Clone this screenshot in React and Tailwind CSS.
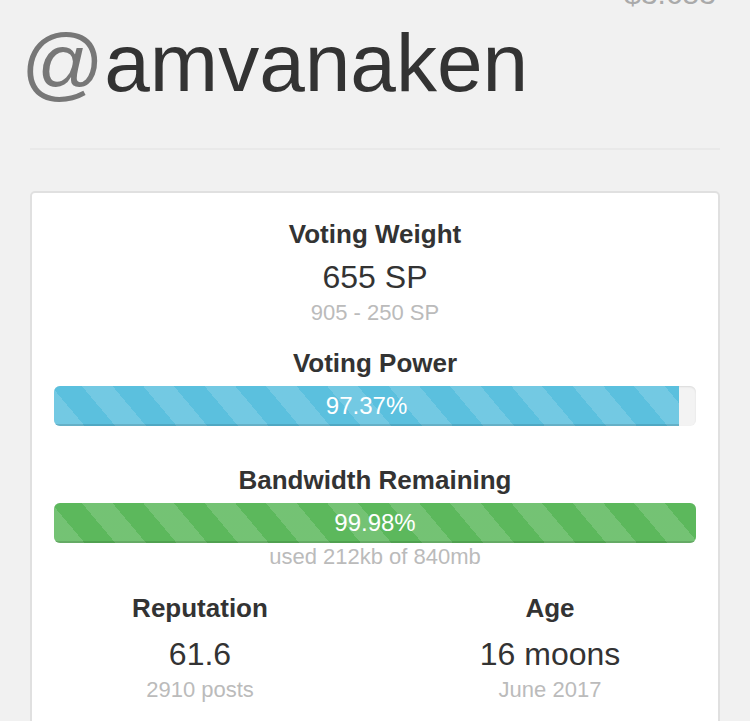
import React from 'react'

const BLUE_STRIPES =
  'bg-[#5bc0de] bg-[repeating-linear-gradient(50deg,rgba(255,255,255,0.15)_0_23.5px,transparent_23.5px_47px)]'
const GREEN_STRIPES =
  'bg-[#5cb85c] bg-[repeating-linear-gradient(50deg,rgba(255,255,255,0.15)_0_23.5px,transparent_23.5px_47px)]'

function Title({ children, className = '' }) {
  return (
    <div className={`text-[26px] leading-none font-bold text-[#333] ${className}`}>{children}</div>
  )
}

function Value({ children, className = '' }) {
  return <div className={`text-[32px] leading-none text-[#333] ${className}`}>{children}</div>
}

function Sub({ children, className = '' }) {
  return <div className={`text-[22px] leading-none text-[#bbb] ${className}`}>{children}</div>
}

function Bar({ pct, label, stripes, className = '' }) {
  return (
    <div
      className={`h-[40px] rounded-[6px] overflow-hidden flex bg-[#f3f3f3] shadow-[inset_0_1px_2px_rgba(0,0,0,0.1)] ${className}`}
    >
      <div
        className={`h-full flex items-center justify-center text-white text-[24px] shadow-[inset_0_-2px_0_rgba(0,0,0,0.12)] ${stripes}`}
        style={{ width: `${pct}%` }}
      >
        {label}
      </div>
    </div>
  )
}

export default function App() {
  return (
    <div
      className="h-[721px] overflow-hidden bg-[#f1f1f1] px-[30px]"
      style={{ fontFamily: '"Liberation Sans", Arial, sans-serif' }}
    >
      <div className="h-[30px] mt-[-21px] pr-[4px] text-right text-[30px] leading-none text-[#aaa]">
        $3.653
      </div>

      <h1 className="mt-[13px] ml-[-9px] h-[82px] text-[82px] leading-none text-[#333]">
        <span className="text-[#777]">@</span>amvanaken
      </h1>

      <div className="mt-[44px] border-t-2 border-[#e9e9e9]" />

      <div className="mt-[41px] bg-white border-2 border-[#e0e0e0] rounded-[5px] px-[22px] pt-[28px] pb-10 text-center">
        <Title>Voting Weight</Title>
        <Value className="mt-[14px]">655 SP</Value>
        <Sub className="mt-[9px]">905 - 250 SP</Sub>

        <Title className="mt-[26px]">Voting Power</Title>
        <Bar className="mt-[10px]" pct={97.37} label="97.37%" stripes={BLUE_STRIPES} />

        <Title className="mt-[41px]">Bandwidth Remaining</Title>
        <Bar className="mt-[10px]" pct={100} label="99.98%" stripes={GREEN_STRIPES} />
        <Sub className="mt-[3px]">used 212kb of 840mb</Sub>

        <div className="mx-[-29px] mt-[27px] grid grid-cols-2">
          <div>
            <Title>Reputation</Title>
            <Value className="mt-[17px]">61.6</Value>
            <Sub className="mt-[9px]">2910 posts</Sub>
          </div>
          <div>
            <Title>Age</Title>
            <Value className="mt-[17px]">16 moons</Value>
            <Sub className="mt-[9px]">June 2017</Sub>
          </div>
        </div>
      </div>
    </div>
  )
}
